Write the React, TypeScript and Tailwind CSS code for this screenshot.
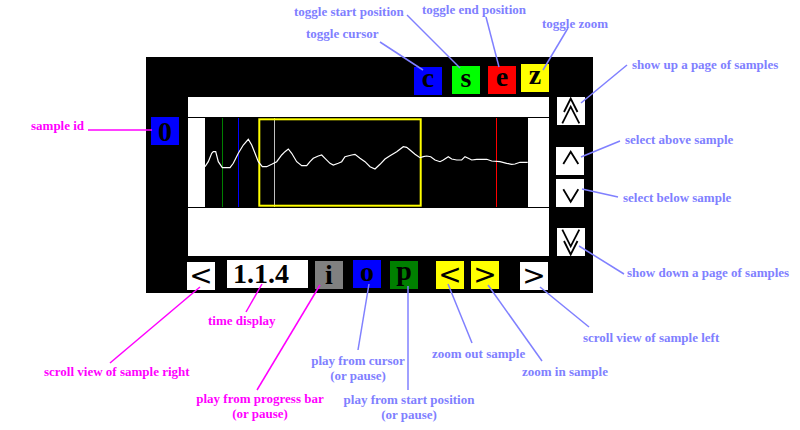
import type { ReactNode } from 'react';

const BLUE_NOTE = '#8080ff';
const PINK_NOTE = '#ff00ff';

// waveform points in page coordinates (inside the black view)
const wave: [number, number][] = [
  [205, 166.7], [208.3, 161.7], [211.7, 153.3], [213.3, 151.7], [215.7, 151.7], [218.3, 161.7],
  [222.3, 167.7], [230, 167.7], [233.3, 163.3], [238.3, 153.3], [243.3, 145], [248.3, 139.3],
  [251.7, 145], [255, 153.3], [258.3, 161.7], [262.3, 166.7], [266.7, 166.7], [271.7, 164.3],
  [276.7, 161.7], [281.7, 155], [285, 151.7], [288.3, 149], [291.7, 153.3], [296.7, 161.7],
  [301.7, 165.7], [306.7, 165.7], [310, 161.7], [313.3, 158.3], [318.3, 156], [321.7, 155],
  [325, 158.3], [330, 163.3], [333.3, 165], [338.3, 163.3], [341.7, 161.7], [345, 156.7],
  [351.7, 155], [355, 154.3], [360, 158.3], [365, 161.7], [370, 166.7], [375, 169],
  [380, 164.3], [385, 159], [390, 155.7], [396.7, 151.7], [403.3, 146.7], [406.7, 147.3],
  [410, 150], [415, 154.3], [420, 157.7], [423.3, 156.7], [426.7, 156], [430.7, 156.7],
  [435, 160], [440, 161.7], [443.3, 160], [448.3, 156.7], [451.7, 159], [456.7, 160],
  [461.7, 160], [465, 156.7], [468.3, 158.3], [471.7, 160], [476.7, 159.3], [486.7, 159.3],
  [491.7, 161], [500, 161.7], [506.7, 163.3], [511.7, 164.3], [515, 164], [520, 162.3],
  [527.7, 162.3],
];

const leaders: { x1: number; y1: number; x2: number; y2: number; c: string }[] = [
  { x1: 380, y1: 42, x2: 423, y2: 70, c: BLUE_NOTE },
  { x1: 407, y1: 15, x2: 460, y2: 68, c: BLUE_NOTE },
  { x1: 486, y1: 17, x2: 499, y2: 67, c: BLUE_NOTE },
  { x1: 568, y1: 28, x2: 543, y2: 70, c: BLUE_NOTE },
  { x1: 627, y1: 65, x2: 581, y2: 103, c: BLUE_NOTE },
  { x1: 620, y1: 141, x2: 581, y2: 157, c: BLUE_NOTE },
  { x1: 582, y1: 189, x2: 618, y2: 197, c: BLUE_NOTE },
  { x1: 579, y1: 246, x2: 624, y2: 274, c: BLUE_NOTE },
  { x1: 369, y1: 284, x2: 358, y2: 350, c: BLUE_NOTE },
  { x1: 408, y1: 286, x2: 408, y2: 390, c: BLUE_NOTE },
  { x1: 448, y1: 284, x2: 472, y2: 343, c: BLUE_NOTE },
  { x1: 488, y1: 285, x2: 542, y2: 361, c: BLUE_NOTE },
  { x1: 540, y1: 287, x2: 589, y2: 327, c: BLUE_NOTE },
  { x1: 88, y1: 130, x2: 152, y2: 130, c: PINK_NOTE },
  { x1: 200, y1: 287, x2: 110, y2: 363, c: PINK_NOTE },
  { x1: 262, y1: 284, x2: 246, y2: 312, c: PINK_NOTE },
  { x1: 320, y1: 285, x2: 257, y2: 390, c: PINK_NOTE },
];

function Key({ className, children }: { className: string; children: ReactNode }) {
  return (
    <div className={`w-[28px] h-[28px] shrink-0 text-center text-[28px] font-bold text-black ${className}`}>
      {children}
    </div>
  );
}

function Chevrons({ lines }: { lines: string[] }) {
  return (
    <svg width="28" height="28" viewBox="0 0 28 28" fill="none" stroke="#000" strokeWidth="1.8">
      {lines.map((p, i) => (
        <polyline key={i} points={p} />
      ))}
    </svg>
  );
}

function Note({ x, y, color, center, children }: { x: number; y: number; color: string; center?: boolean; children: ReactNode }) {
  return (
    <div
      className={`absolute text-[13px] leading-[15px] font-bold whitespace-nowrap ${center ? 'text-center -translate-x-1/2' : ''}`}
      style={{ left: x, top: y, color }}
    >
      {children}
    </div>
  );
}

export default function App() {
  return (
    <div className="relative w-[800px] h-[430px] overflow-hidden bg-white pt-[57px] font-['Liberation_Serif',serif]">
      {/* Player panel */}
      <div className="ml-[146px] w-[447px] h-[236px] bg-black flex flex-col">
        {/* toggle keys */}
        <div className="h-[40px] flex items-start pl-[268px]">
          <Key className="mt-[10px] bg-[#0000ff] leading-[21px]">c</Key>
          <Key className="ml-[10px] mt-[9px] bg-[#00ff00] leading-[23px]">s</Key>
          <Key className="ml-[8px] mt-[9px] bg-[#ff0000] leading-[21px]">e</Key>
          <Key className="ml-[5px] mt-[7px] bg-[#ffff00] leading-[21px]">z</Key>
        </div>

        {/* sample view */}
        <div className="h-[159px] flex items-start">
          <Key className="ml-[5px] mt-[20px] bg-[#0000ff] leading-[30px]">0</Key>

          <div className="ml-[9px] w-[361px] h-[159px] bg-white flex flex-col">
            <div className="h-[20px]" />
            <div className="h-[91px] border-y border-black flex">
              <div className="w-[17px]" />
              <div className="w-[323px] h-[89px] bg-black">
                <svg width="323" height="89" viewBox="205 118 323 89">
                  <line x1="222.5" y1="118" x2="222.5" y2="207" stroke="#008000" strokeWidth="1" />
                  <line x1="238.5" y1="118" x2="238.5" y2="207" stroke="#0000ff" strokeWidth="1" />
                  <line x1="274.5" y1="118" x2="274.5" y2="207" stroke="#c0c0c0" strokeWidth="1" />
                  <line x1="496.5" y1="118" x2="496.5" y2="207" stroke="#ff0000" strokeWidth="1" />
                  <rect x="259.3" y="119.3" width="161.4" height="86.4" fill="none" stroke="#ffff00" strokeWidth="2" />
                  <polyline
                    points={wave.map(([x, y]) => `${x},${y}`).join(' ')}
                    fill="none"
                    stroke="#fff"
                    strokeWidth="1.2"
                  />
                </svg>
              </div>
              <div className="w-[21px]" />
            </div>
          </div>

          <div className="ml-[7px] w-[29px] flex flex-col">
            <div className="ml-px w-[28px] h-[28px] bg-white">
              <Chevrons lines={['7,15 13.7,1.5 20.5,15', '5.3,26.3 13.7,9.7 22.3,26.3']} />
            </div>
            <div className="mt-[22px] w-[28px] h-[28px] bg-white">
              <Chevrons lines={['7.3,17 14.7,4.7 22.3,17']} />
            </div>
            <div className="mt-[4px] w-[28px] h-[28px] bg-white">
              <Chevrons lines={['7.3,10.3 14.7,22.7 22.3,10.3']} />
            </div>
            <div className="ml-px mt-[21px] w-[28px] h-[28px] bg-white">
              <Chevrons lines={['5.3,1.7 13.7,18.3 22.3,1.7', '7,13 13.7,26.5 20.5,13']} />
            </div>
          </div>
        </div>

        {/* transport row */}
        <div className="flex items-start">
          <Key className="ml-[41px] mt-[6px] bg-white leading-[28px] font-normal font-['DejaVu_Sans',sans-serif] text-[28px]">&lt;</Key>
          <div className="ml-[12px] mt-[4px] w-[81px] h-[28px] bg-white pl-[6px] text-[28px] leading-[28px] font-bold text-black">
            1.1.4
          </div>
          <Key className="ml-[7px] mt-[5px] bg-[#808080] leading-[28px]">i</Key>
          <Key className="ml-[10px] mt-[4px] bg-[#0000ff] leading-[24px]">o</Key>
          <Key className="ml-[9px] mt-[5px] bg-[#008000] leading-[20px] text-[#800000]">p</Key>
          <Key className="ml-[18px] mt-[5px] bg-[#ffff00] leading-[28px] font-normal font-['DejaVu_Sans',sans-serif] text-[28px]">&lt;</Key>
          <Key className="ml-[7px] mt-[5px] bg-[#ffff00] leading-[28px] font-normal font-['DejaVu_Sans',sans-serif] text-[28px]">&gt;</Key>
          <Key className="ml-[21px] mt-[6px] bg-white leading-[28px] font-normal font-['DejaVu_Sans',sans-serif] text-[28px]">&gt;</Key>
        </div>
      </div>

      {/* leader lines */}
      <svg className="absolute inset-0 pointer-events-none" width="800" height="430" viewBox="0 0 800 430">
        {leaders.map((l, i) => (
          <line key={i} x1={l.x1} y1={l.y1} x2={l.x2} y2={l.y2} stroke={l.c} strokeWidth="1.5" />
        ))}
      </svg>

      {/* annotations */}
      <Note x={294} y={4} color={BLUE_NOTE}>toggle start position</Note>
      <Note x={422} y={2} color={BLUE_NOTE}>toggle end position</Note>
      <Note x={306} y={26} color={BLUE_NOTE}>toggle cursor</Note>
      <Note x={542} y={16} color={BLUE_NOTE}>toggle zoom</Note>
      <Note x={632} y={57} color={BLUE_NOTE}>show up a page of samples</Note>
      <Note x={625} y={132} color={BLUE_NOTE}>select above sample</Note>
      <Note x={623} y={190} color={BLUE_NOTE}>select below sample</Note>
      <Note x={627} y={265} color={BLUE_NOTE}>show down a page of samples</Note>
      <Note x={31} y={118} color={PINK_NOTE}>sample id</Note>
      <Note x={208} y={313} color={PINK_NOTE}>time display</Note>
      <Note x={44} y={364} color={PINK_NOTE}>scroll view of sample right</Note>
      <Note x={260} y={391} color={PINK_NOTE} center>
        play from progress bar
        <br />
        (or pause)
      </Note>
      <Note x={358} y={353} color={BLUE_NOTE} center>
        play from cursor
        <br />
        (or pause)
      </Note>
      <Note x={409} y={392} color={BLUE_NOTE} center>
        play from start position
        <br />
        (or pause)
      </Note>
      <Note x={432} y={346} color={BLUE_NOTE}>zoom out sample</Note>
      <Note x={522} y={364} color={BLUE_NOTE}>zoom in sample</Note>
      <Note x={583} y={330} color={BLUE_NOTE}>scroll view of sample left</Note>
    </div>
  );
}
